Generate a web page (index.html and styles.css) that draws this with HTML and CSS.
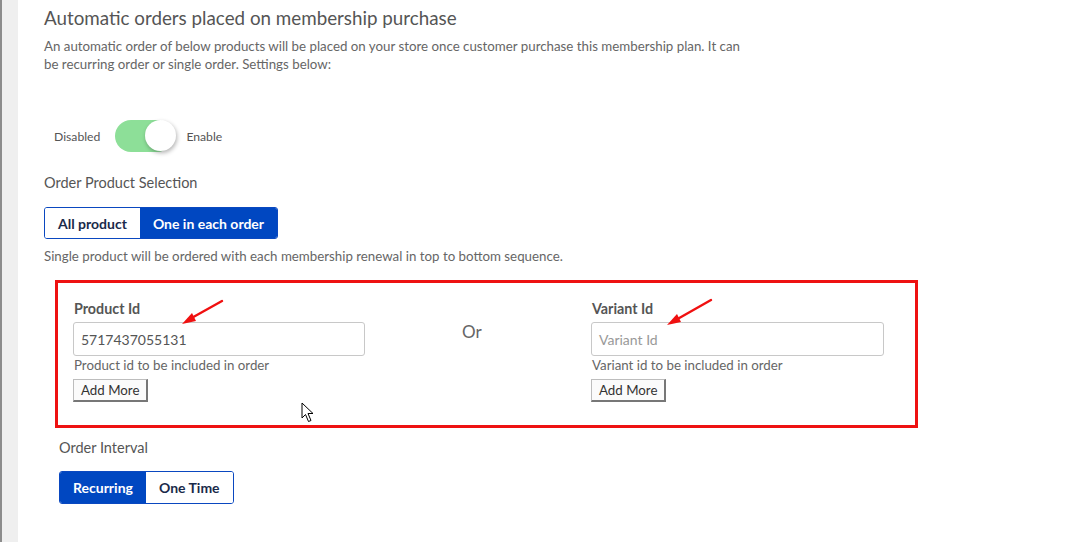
FILE: index.html
```html
<!DOCTYPE html>
<html>
<head>
<meta charset="utf-8">
<link rel="stylesheet" href="styles.css">
</head>
<body>
<div class="page">
  <div class="sidebar"></div>
  <div class="content">
    <h1 class="title">Automatic orders placed on membership purchase</h1>
    <p class="desc">An automatic order of below products will be placed on your store once customer purchase this membership plan. It can be recurring order or single order. Settings below:</p>

    <div class="toggle-row">
      <span class="toggle-label">Disabled</span>
      <span class="toggle"><span class="knob"></span></span>
      <span class="toggle-label">Enable</span>
    </div>

    <div class="section-label">Order Product Selection</div>
    <div class="btn-group">
      <span class="seg">All product</span>
      <span class="seg active">One in each order</span>
    </div>
    <div class="note">Single product will be ordered with each membership renewal in top to bottom sequence.</div>

    <div class="red-box">
      <div class="field">
        <label class="field-label">Product Id</label>
        <div class="input">5717437055131</div>
        <div class="help">Product id to be included in order</div>
        <button class="add-btn">Add More</button>
      </div>
      <div class="or">Or</div>
      <div class="field">
        <label class="field-label">Variant Id</label>
        <div class="input placeholder">Variant Id</div>
        <div class="help">Variant id to be included in order</div>
        <button class="add-btn">Add More</button>
      </div>
      <svg class="arrow arrow1" width="44" height="28" viewBox="0 0 44 28">
        <line x1="42" y1="2" x2="8" y2="21" stroke="#f01010" stroke-width="2.4" stroke-linecap="round"/>
        <polygon points="2,25 12,14 16,22" fill="#f01010"/>
      </svg>
      <svg class="arrow arrow2" width="48" height="30" viewBox="0 0 48 30">
        <line x1="46" y1="2" x2="9" y2="23" stroke="#f01010" stroke-width="2.4" stroke-linecap="round"/>
        <polygon points="2,27 12,16 16,24" fill="#f01010"/>
      </svg>
      <svg class="cursor" width="14" height="21" viewBox="0 0 14 21">
        <path d="M1 1 L1 16 L4.5 12.5 L7.5 19.5 L10 18.5 L7 11.5 L12 11.5 Z" fill="#fff" stroke="#000" stroke-width="1" stroke-linejoin="miter"/>
      </svg>
    </div>

    <div class="interval">
      <div class="section-label">Order Interval</div>
      <div class="btn-group">
        <span class="seg active">Recurring</span>
        <span class="seg">One Time</span>
      </div>
    </div>
  </div>
</div>
</body>
</html>
```

FILE: styles.css
```css
* { box-sizing: border-box; }
html, body { margin: 0; padding: 0; background: #fff; }
body {
  font-family: "Lato", "Noto Sans", sans-serif;
  color: #5a5a5a;
  width: 1066px;
  height: 542px;
  overflow: hidden;
}
.page { display: flex; height: 542px; }
.sidebar {
  width: 18px;
  flex: none;
  background: #efefef;
  border-left: 2px solid #8c8c8c;
}
.content { padding: 5px 0 0 26px; flex: 1; }
.title {
  margin: 0;
  font-size: 18.8px;
  line-height: 26px;
  font-weight: 400;
  color: #555;
}
.desc {
  margin: 6px 0 0;
  width: 712px;
  font-size: 13.3px;
  line-height: 18px;
  color: #666;
}
.toggle-row {
  display: flex;
  align-items: center;
  margin: 47px 0 0 10px;
}
.toggle-label { font-size: 12.2px; color: #555; }
.toggle {
  margin: 0 13px 0 15px;
  width: 58px;
  height: 32px;
  border-radius: 16px;
  background: #8ddf98;
  position: relative;
  display: block;
}
.knob {
  position: absolute;
  right: -3px;
  top: 0;
  width: 31px;
  height: 31px;
  border-radius: 50%;
  background: #fff;
  box-shadow: 1px 2px 4px rgba(0,0,0,0.3);
}
.section-label {
  margin-top: 22px;
  font-size: 14.5px;
  line-height: 18px;
  color: #555;
}
.btn-group {
  display: inline-flex;
  margin-top: 15px;
  border: 1px solid #0a48c0;
  border-radius: 3px;
  overflow: hidden;
  height: 32px;
}
.seg {
  display: flex;
  align-items: center;
  padding: 0 13px;
  font-size: 14px;
  font-weight: 700;
  color: #1a2a4a;
  background: #fff;
}
.seg.active { background: #0047c1; color: #fff; }
.note {
  margin-top: 8px;
  font-size: 13.3px;
  line-height: 18px;
  color: #666;
}
.red-box {
  position: relative;
  margin: 15px 0 0 11px;
  width: 863px;
  height: 148px;
  border: 3px solid #ee1111;
  display: grid;
  grid-template-columns: 292px 226px 293px;
  padding: 17px 0 0 15px;
  align-items: start;
}
.field { display: flex; flex-direction: column; align-items: flex-start; }
.field-label {
  font-size: 14.3px;
  font-weight: 700;
  line-height: 18px;
  color: #555;
  margin-left: 1px;
}
.input {
  margin-top: 4px;
  width: 100%;
  height: 34px;
  border: 1px solid #c8c8c8;
  border-radius: 3px;
  padding: 0 7px;
  display: flex;
  align-items: center;
  font-size: 14px;
  color: #555;
}
.input.placeholder { color: #999; }
.help {
  margin-top: 0;
  font-size: 13.3px;
  line-height: 18px;
  color: #666;
  margin-left: 1px;
}
.add-btn {
  margin-top: 5px;
  height: 23px;
  padding: 0 7px;
  font-family: inherit;
  font-size: 13.3px;
  color: #333;
  background: #fbfbfb;
  border: 1px solid #bdbdbd;
  border-right: 2px solid #777;
  border-bottom: 2px solid #777;
  border-radius: 0;
}
.or {
  margin-top: 21px;
  padding-left: 97px;
  font-size: 17px;
  color: #666;
}
.arrow { position: absolute; }
.arrow1 { left: 122px; top: 16px; }
.arrow2 { left: 607px; top: 15px; }
.cursor { position: absolute; left: 243px; top: 119px; }
.interval { padding-left: 15px; }
.interval .section-label { margin-top: 11px; }
.interval .btn-group { margin-top: 14px; height: 33px; }
```
